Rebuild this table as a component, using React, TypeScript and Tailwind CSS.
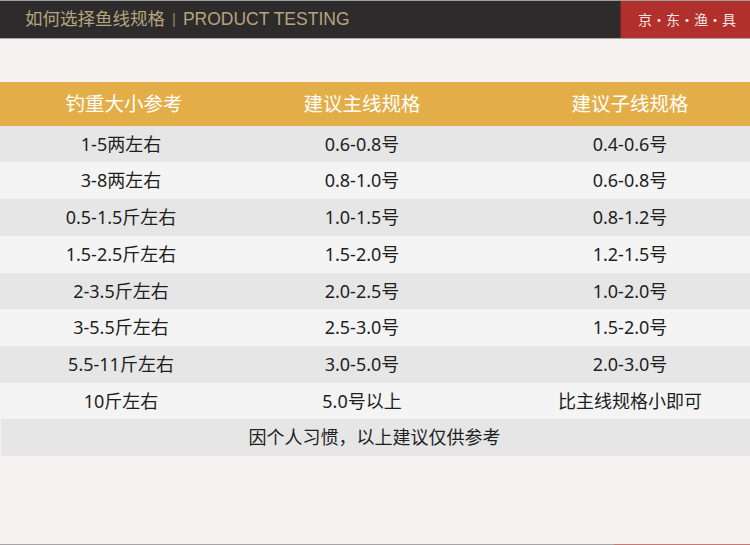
import React from "react";

const rows: [string, string, string][] = [
  ["1-5两左右", "0.6-0.8号", "0.4-0.6号"],
  ["3-8两左右", "0.8-1.0号", "0.6-0.8号"],
  ["0.5-1.5斤左右", "1.0-1.5号", "0.8-1.2号"],
  ["1.5-2.5斤左右", "1.5-2.0号", "1.2-1.5号"],
  ["2-3.5斤左右", "2.0-2.5号", "1.0-2.0号"],
  ["3-5.5斤左右", "2.5-3.0号", "1.5-2.0号"],
  ["5.5-11斤左右", "3.0-5.0号", "2.0-3.0号"],
  ["10斤左右", "5.0号以上", "比主线规格小即可"],
];

const heights = ["h-[36px]", "h-[37px]", "h-[37px]", "h-[37px]", "h-[36px]", "h-[37px]", "h-[37px]", "h-[36px]"];

const App: React.FC = () => {
  return (
    <div
      className="w-[750px] h-[545px] bg-[#f6f2f1] flex flex-col overflow-hidden"
      style={{ fontFamily: '"Noto Sans", "Noto Sans CJK SC", sans-serif' }}
    >
      {/* Top bar */}
      <div className="border-t border-[#9f9d9d] border-b border-b-[#a8a6a6] h-[39px] flex bg-[#2d2b2b]">
        <div className="flex-1 flex items-center pl-[25px] text-[17.5px] text-[#b6a47d]" style={{ fontFamily: '"Liberation Sans", "Noto Sans CJK SC", sans-serif' }}>
          <span>如何选择鱼线规格</span>
          <span className="mx-[7px] text-[15px] text-[#8f8268]">|</span>
          <span>PRODUCT TESTING</span>
        </div>
        <div className="w-[130px] bg-[#b1302c] border-l border-[#6e2523] flex items-center justify-center text-[14px] text-[#f3e6e4] pl-[3px]" style={{ fontFamily: '"Noto Sans CJK SC", sans-serif' }}>
          京·东·渔·具
        </div>
      </div>

      {/* Table */}
      <div className="mt-[43px]">
        <div className="grid grid-cols-[242px_240px_1fr] h-[44px] bg-[#e3ae47] items-center text-white text-[19.5px]">
          <div className="text-center pl-[6px]">钓重大小参考</div>
          <div className="text-center">建议主线规格</div>
          <div className="text-center pl-[28px]">建议子线规格</div>
        </div>
        {rows.map((r, i) => (
          <div
            key={i}
            className={`grid grid-cols-[242px_240px_1fr] items-center text-[18px] text-[#1e1e1e] ${heights[i]} ${i % 2 === 0 ? "bg-[#e6e6e6]" : "bg-[#f4f4f4]"}`}
          >
            <div className="text-center">{r[0]}</div>
            <div className="text-center">{r[1]}</div>
            <div className="text-center pl-[28px]">{r[2]}</div>
          </div>
        ))}
        <div className="ml-[1px] h-[37px] bg-[#e6e6e6] flex items-center justify-center text-[18px] text-[#1e1e1e] pr-[2px]">
          因个人习惯，以上建议仅供参考
        </div>
      </div>

      {/* Bottom line */}
      <div className="mt-auto flex h-[1px]">
        <div className="w-[614px] bg-[#a5a3a3]" />
        <div className="flex-1 bg-[#c27875]" />
      </div>
    </div>
  );
};

export default App;
